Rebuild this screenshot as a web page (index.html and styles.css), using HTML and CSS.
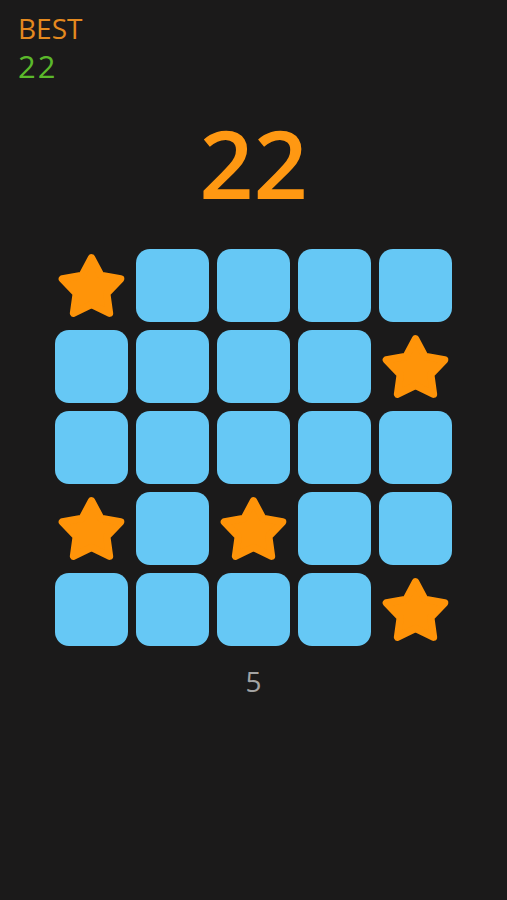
FILE: index.html
```html
<!DOCTYPE html>
<html>
<head lang="en">
    <meta charset="UTF-8">
    <title>Stars</title>
    <link rel="stylesheet" href="styles.css">
</head>
<body>
<svg class="defs" width="0" height="0">
    <symbol id="star" viewBox="-50 -50 100 100">
        <polygon transform="translate(0,4)"
                 points="0,-42 12.93,-17.8 39.94,-12.98 20.92,6.8 24.69,33.98 0,22 -24.69,33.98 -20.92,6.8 -39.94,-12.98 -12.93,-17.8"
                 fill="#ff9409" stroke="#ff9409" stroke-width="10" stroke-linejoin="round"/>
    </symbol>
</svg>

<div class="best">
    <div class="best-label">BEST</div>
    <div class="best-value">22</div>
</div>

<div class="score">22</div>

<div class="board">
    <div class="cell"><svg class="star"><use href="#star"/></svg></div>
    <div class="cell tile"></div>
    <div class="cell tile"></div>
    <div class="cell tile"></div>
    <div class="cell tile"></div>

    <div class="cell tile"></div>
    <div class="cell tile"></div>
    <div class="cell tile"></div>
    <div class="cell tile"></div>
    <div class="cell"><svg class="star"><use href="#star"/></svg></div>

    <div class="cell tile"></div>
    <div class="cell tile"></div>
    <div class="cell tile"></div>
    <div class="cell tile"></div>
    <div class="cell tile"></div>

    <div class="cell"><svg class="star"><use href="#star"/></svg></div>
    <div class="cell tile"></div>
    <div class="cell"><svg class="star"><use href="#star"/></svg></div>
    <div class="cell tile"></div>
    <div class="cell tile"></div>

    <div class="cell tile"></div>
    <div class="cell tile"></div>
    <div class="cell tile"></div>
    <div class="cell tile"></div>
    <div class="cell"><svg class="star"><use href="#star"/></svg></div>
</div>

<div class="moves">5</div>
</body>
</html>
```

FILE: styles.css
```css
* {
    padding: 0;
    margin: 0;
}
html, body {
    background-color: #1b1a1a;
}
body {
    width: 507px;
    height: 900px;
    font-family: "Open Sans", "Liberation Sans", sans-serif;
}
.defs {
    position: absolute;
}
.best {
    padding: 9px 0 0 18px;
    font-size: 28px;
    line-height: 38px;
}
.best-label {
    color: #e4891f;
}
.best-value {
    font-size: 31px;
    letter-spacing: 2px;
    color: #5bb82b;
}
.score {
    margin-top: 30px;
    text-align: center;
    font-size: 95px;
    font-weight: 600;
    line-height: 95px;
    color: #ff9812;
}
.board {
    display: grid;
    grid-template-columns: repeat(5, 73px);
    grid-auto-rows: 73px;
    gap: 8px;
    justify-content: center;
    margin-top: 39px;
}
.cell {
    display: flex;
    align-items: center;
    justify-content: center;
}
.tile {
    border-radius: 14px;
    background-color: #66c8f5;
}
.star {
    width: 73px;
    height: 73px;
}
.moves {
    margin-top: 16px;
    text-align: center;
    font-size: 28px;
    line-height: 38px;
    color: #a3a3a3;
}
```
